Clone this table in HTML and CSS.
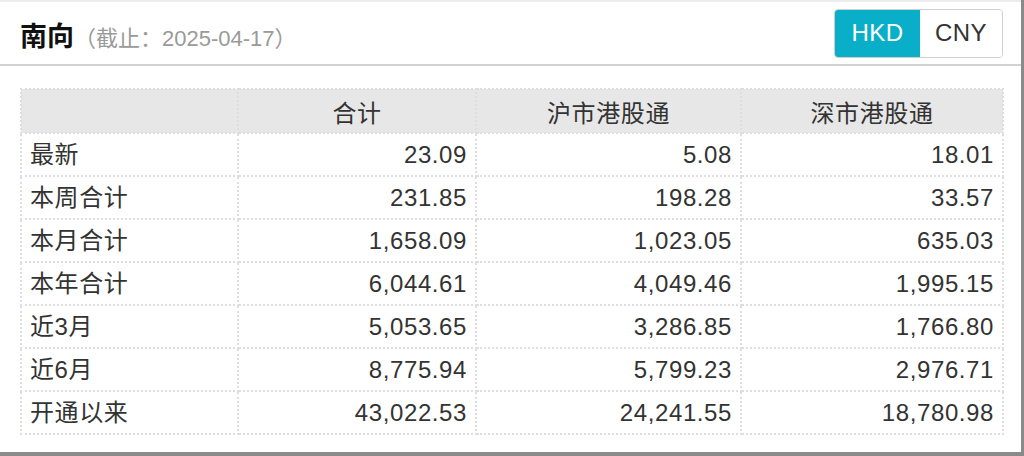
FILE: index.html
```html
<!DOCTYPE html>
<html lang="zh-CN">
<head>
<meta charset="utf-8">
<title>南向</title>
<link rel="stylesheet" href="styles.css">
</head>
<body>
<div class="card">
  <div class="head">
    <div class="title"><span class="name">南向</span><span class="date">（截止：2025-04-17）</span></div>
    <div class="switch">
      <span class="btn active">HKD</span><span class="btn">CNY</span>
    </div>
  </div>
  <table class="grid">
    <colgroup>
      <col class="c1"><col class="c2"><col class="c3"><col class="c4">
    </colgroup>
    <thead>
      <tr><th></th><th>合计</th><th>沪市港股通</th><th>深市港股通</th></tr>
    </thead>
    <tbody>
      <tr><td>最新</td><td>23.09</td><td>5.08</td><td>18.01</td></tr>
      <tr><td>本周合计</td><td>231.85</td><td>198.28</td><td>33.57</td></tr>
      <tr><td>本月合计</td><td>1,658.09</td><td>1,023.05</td><td>635.03</td></tr>
      <tr><td>本年合计</td><td>6,044.61</td><td>4,049.46</td><td>1,995.15</td></tr>
      <tr><td>近3月</td><td>5,053.65</td><td>3,286.85</td><td>1,766.80</td></tr>
      <tr><td>近6月</td><td>8,775.94</td><td>5,799.23</td><td>2,976.71</td></tr>
      <tr><td>开通以来</td><td>43,022.53</td><td>24,241.55</td><td>18,780.98</td></tr>
    </tbody>
  </table>
</div>
</body>
</html>
```
FILE: styles.css
```css
html, body {
  margin: 0;
  padding: 0;
}
body {
  background: #8a8a8a;
  width: 1024px;
  height: 456px;
  overflow: hidden;
  font-family: "Liberation Sans", "Noto Sans CJK SC", sans-serif;
}
.card {
  width: 1021px;
  height: 452px;
  box-sizing: border-box;
  background: #fff;
  border-top: 2px solid #ececec;
}
.head {
  box-sizing: border-box;
  border-bottom: 2px solid #d2d2d2;
  display: flex;
  align-items: center;
  justify-content: space-between;
  padding: 0 18px 0 20px;
  height: 64px;
}
.title {
  display: flex;
  align-items: baseline;
  padding-top: 2px;
}
.name {
  font-size: 27px;
  font-weight: bold;
  color: #111;
}
.date {
  font-size: 22px;
  color: #9a9a9a;
}
.switch {
  display: flex;
  height: 49px;
  border: 1px solid #cfcfcf;
  border-radius: 4px;
  overflow: hidden;
  box-sizing: border-box;
}
.btn {
  display: flex;
  align-items: center;
  justify-content: center;
  font-size: 24px;
  letter-spacing: 0.4px;
  color: #333;
  background: #fff;
  width: 82px;
}
.btn.active {
  background: #09aec9;
  color: #fff;
  width: 85px;
}
.grid {
  margin: 22px 0 0 20px;
  width: 982px;
  border-collapse: collapse;
  table-layout: fixed;
  border: 2px dotted #dedede;
  font-size: 24px;
  letter-spacing: 0.6px;
  color: #333;
}
.c1 { width: 217px; }
.c2 { width: 238px; }
.c3 { width: 265px; }
.c4 { width: 262px; }
.grid th {
  background: #e7e7e7;
  font-weight: normal;
  text-align: center;
  height: 42px;
  padding: 0 8px;
  border: 2px dotted #dedede;
}
.grid td {
  height: 41px;
  padding: 0 8px;
  text-align: right;
  border: 2px dotted #dedede;
  line-height: 1;
}
.grid td:first-child {
  text-align: left;
}
```
